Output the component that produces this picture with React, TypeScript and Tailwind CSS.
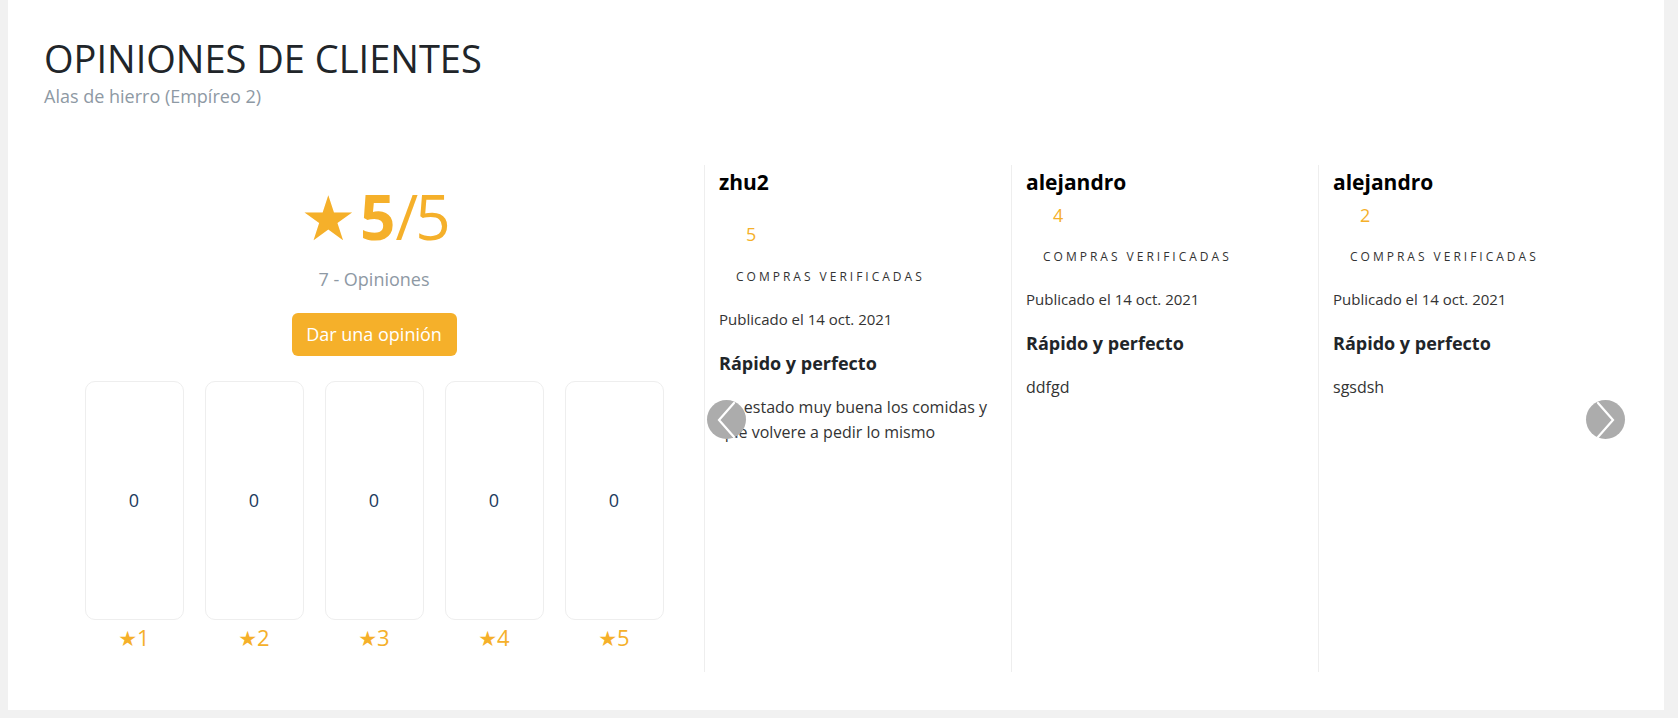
const reviews = [
  { name: "zhu2", stars: 5, body: "Ha estado muy buena los comidas y que volvere a pedir lo mismo", first: true },
  { name: "alejandro", stars: 4, body: "ddfgd", first: false },
  { name: "alejandro", stars: 2, body: "sgsdsh", first: false },
]

const bars = [1, 2, 3, 4, 5]

const Chevron = ({ dir }) => (
  <svg width="19" height="36" viewBox="0 0 19 36" fill="none" stroke="white" strokeWidth="2.2" strokeLinecap="round">
    {dir === "left" ? <polyline points="17,1 2,18 17,35" /> : <polyline points="2,1 17,18 2,35" />}
  </svg>
)

const ReviewCol = ({ r }) => (
  <div className="w-[307px] border-l border-[#eeeeee] pl-[14px] pr-3">
    <div className="pt-[3px] text-[21px] font-bold leading-[28px] text-black">{r.name}</div>
    <div className={`${r.first ? "mt-[26px]" : "mt-[7px]"} pl-[27px] text-[18px] leading-[24px] text-[#f5b02a]`}>
      {r.stars}
    </div>
    <div className={`${r.first ? "mt-[22px]" : "mt-[21px]"} pl-[17px] text-[12px] leading-[18px] tracking-[3px] text-[#333]`}>
      COMPRAS VERIFICADAS
    </div>
    <div className="mt-[23px] text-[15px] leading-[20px] text-[#333]">Publicado el 14 oct. 2021</div>
    <div className="mt-[21px] text-[18px] font-bold leading-[26px] text-[#212529]">Rápido y perfecto</div>
    <p className="mt-[19px] w-[280px] text-[16px] leading-[25px] text-[#333]">{r.body}</p>
  </div>
)

export default function App() {
  return (
    <div className="min-h-screen w-full bg-[#f1f1f1] pb-2 pl-2 pr-[14px]" style={{ fontFamily: '"Open Sans", sans-serif' }}>
      <div className="bg-white px-[36px] pt-[35px] pb-[38px]">
        <h1 className="text-[38px] font-medium leading-[46px] text-[#212529]">OPINIONES DE CLIENTES</h1>
        <div className="mt-[3px] text-[18px] leading-[24px] text-[#8e99a4]">Alas de hierro (Empíreo 2)</div>

        <div className="relative mt-[57px] flex h-[507px]">
          <div className="flex w-[660px] flex-col">
            <div className="flex flex-col items-center">
              <div className="mt-[15px] flex items-baseline text-[62px] leading-[72px] text-[#f5b02a]">
                <span className="mr-[4px]" style={{ fontFamily: '"DejaVu Sans", sans-serif' }}>★</span>
                <span className="font-bold">5</span>
                <span className="tracking-[-3px]">/5</span>
              </div>
              <div className="mt-[12px] text-[18px] leading-[24px] text-[#8e99a4]">7 - Opiniones</div>
              <button className="mt-[22px] h-[43px] w-[165px] rounded-[6px] bg-[#f5b02a] text-[18px] text-white">
                Dar una opinión
              </button>
            </div>
            <div className="mt-[25px] flex justify-center gap-[21px]">
              {bars.map((b) => (
                <div key={b} className="flex w-[99px] flex-col items-center">
                  <div className="flex h-[239px] w-[99px] items-center justify-center rounded-[10px] border border-[#eeeeee] text-[18px] text-[#1d3a5c]">
                    0
                  </div>
                  <div className="mt-[3px] flex items-baseline text-[22px] leading-[28px] text-[#f5b02a]">
                    <span style={{ fontFamily: '"DejaVu Sans", sans-serif' }} className="text-[21px]">★</span>
                    <span>{b}</span>
                  </div>
                </div>
              ))}
            </div>
          </div>
          {reviews.map((r, i) => (
            <ReviewCol key={i} r={r} />
          ))}
          <button className="absolute left-[663px] top-[235px] flex h-[39px] w-[39px] items-center justify-center rounded-full bg-[#acacac]">
            <Chevron dir="left" />
          </button>
          <button className="absolute left-[1542px] top-[235px] flex h-[39px] w-[39px] items-center justify-center rounded-full bg-[#acacac]">
            <Chevron dir="right" />
          </button>
        </div>
      </div>
    </div>
  )
}
